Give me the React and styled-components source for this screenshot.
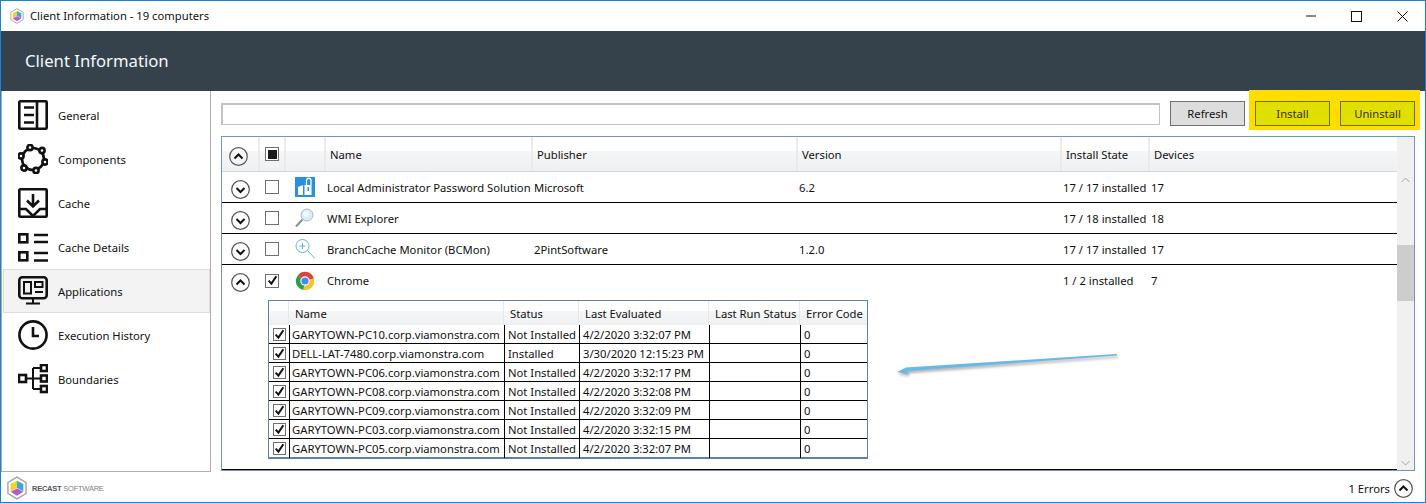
import React from "react";
import styled, { createGlobalStyle } from "styled-components";

//*********************************************************
// Data
//*********************************************************
const apps = [
	{ name: "Local Administrator Password Solution", publisher: "Microsoft", version: "6.2", state: "17 / 17 installed", devices: "17", icon: "laps" },
	{ name: "WMI Explorer", publisher: "", version: "", state: "17 / 18 installed", devices: "18", icon: "wmi" },
	{ name: "BranchCache Monitor (BCMon)", publisher: "2PintSoftware", version: "1.2.0", state: "17 / 17 installed", devices: "17", icon: "bc" }
];

const machines = [
	["GARYTOWN-PC10.corp.viamonstra.com", "Not Installed", "4/2/2020 3:32:07 PM"],
	["DELL-LAT-7480.corp.viamonstra.com", "Installed", "3/30/2020 12:15:23 PM"],
	["GARYTOWN-PC06.corp.viamonstra.com", "Not Installed", "4/2/2020 3:32:17 PM"],
	["GARYTOWN-PC08.corp.viamonstra.com", "Not Installed", "4/2/2020 3:32:08 PM"],
	["GARYTOWN-PC09.corp.viamonstra.com", "Not Installed", "4/2/2020 3:32:09 PM"],
	["GARYTOWN-PC03.corp.viamonstra.com", "Not Installed", "4/2/2020 3:32:15 PM"],
	["GARYTOWN-PC05.corp.viamonstra.com", "Not Installed", "4/2/2020 3:32:07 PM"]
];

//*********************************************************
// Styles
//*********************************************************
const GlobalStyle = createGlobalStyle`
	* { box-sizing: border-box; }
	body {
		margin: 0;
		background: #fff;
		font-family: "Noto Sans", "Open Sans", sans-serif;
		font-size: 11.25px;
		color: #111;
	}
`;

const Window = styled.div`
	width: 1426px;
	height: 503px;
	border: 1px solid #1883d7;
	display: flex;
	flex-direction: column;
	overflow: hidden;
`;

const TitleBar = styled.div`
	height: 30px;
	flex: none;
	display: flex;
	align-items: center;
	padding-left: 9px;
`;

const TitleText = styled.span`
	flex: 1;
	padding: 0 0 1px 6px;
`;

const WinButton = styled.div`
	width: 45.5px;
	height: 30px;
	display: flex;
	align-items: center;
	justify-content: center;
`;

const Banner = styled.div`
	height: 60px;
	flex: none;
	background: #36424b;
	color: #f4f8fb;
	font-size: 16.7px;
	display: flex;
	align-items: center;
	padding: 0 0 2px 24px;
`;

const Body = styled.div`
	height: 381px;
	flex: none;
	display: flex;
`;

const Sidebar = styled.nav`
	width: 210px;
	flex: none;
	border: 1px solid #aeaeae;
	border-top: none;
	padding: 2px 0 0 1px;
`;

const NavItem = styled.div`
	height: 44px;
	width: 207px;
	display: flex;
	align-items: center;
	gap: 10px;
	padding-left: 14px;
	border: 1px solid ${(p) => (p.$active ? "#dcdcdc" : "transparent")};
	background: ${(p) => (p.$active ? "#f3f3f3" : "transparent")};
`;

const Main = styled.main`
	flex: 1;
	min-width: 0;
	display: flex;
	flex-direction: column;
`;

const Toolbar = styled.div`
	height: 39px;
	flex: none;
	display: flex;
	align-items: flex-start;
	padding: 10px 5px 0 10px;
	margin-bottom: 6px;
`;

const SearchInput = styled.div`
	flex: 1;
	height: 22px;
	margin: 2px 10px 0 0;
	border: 2px solid #c2c2c2;
	border-right-width: 1px;
	border-bottom-width: 1px;
	background: #fff;
`;

const Button = styled.div`
	width: 75px;
	height: 25px;
	display: flex;
	align-items: center;
	justify-content: center;
	background: #dddddd;
	border: 1.5px solid #707070;
`;

const RefreshButton = styled(Button)`
	margin-right: 4px;
`;

const Highlight = styled.div`
	display: flex;
	gap: 10px;
	height: 40px;
	margin-top: -11px;
	padding: 11px 5px 4px 6px;
	background: #ffdd00;
`;

const ActionButton = styled(Button)`
	background: #e0df00;
	border-color: #6d6a18;
	color: #3a2f00;
`;

const DataGrid = styled.div`
	position: relative;
	height: 335px;
	margin: 0 10px;
	border: 1px solid #6b98c6;
	display: flex;
	overflow: hidden;
`;

const GridBody = styled.div`
	flex: 1;
	min-width: 0;
`;

const columns = "38px 26px 40px 207px 265px 264px 88px 1fr";

const HeadRow = styled.div`
	height: 35px;
	display: grid;
	grid-template-columns: ${columns};
	background: linear-gradient(#fff 0, #fff 14px, #f5f6f7 14px, #eff0f2 100%);
	border-bottom: 1px solid #d3d6da;
`;

const HeadCell = styled.div`
	display: flex;
	align-items: center;
	padding: 1px 0 0 4px;
	border-right: 2px solid #e9eaec;
	&:last-child {
		border-right: none;
	}
`;

const ToggleHeadCell = styled(HeadCell)`
	padding: 5px 3px 0 0;
	justify-content: center;
`;

const CheckHeadCell = styled(HeadCell)`
	padding: 0 0 0 5px;
`;

const AppRow = styled.div`
	height: 31px;
	display: grid;
	grid-template-columns: ${columns};
	align-items: center;
	border-bottom: ${(p) => (p.$open ? "none" : "1px solid #000")};
`;

const Cell = styled.div`
	white-space: nowrap;
	padding-left: 1px;
`;

const ToggleCell = styled.div`
	display: flex;
	justify-content: center;
	margin-top: 4px;
	padding-right: 2px;
`;

const IconCell = styled.div`
	display: flex;
	padding-left: 9px;
`;

const CheckCell = styled.div`
	display: flex;
	padding-left: 5px;
`;

const Box = styled.div`
	width: ${(p) => p.$size}px;
	height: ${(p) => p.$size}px;
	border: 1px solid #6f6f6f;
	background: #fff;
	display: flex;
	align-items: center;
	justify-content: center;
`;

const BoxFill = styled.div`
	width: 9px;
	height: 9px;
	background: #1b1b1b;
`;

const Expanded = styled.div`
	height: 174px;
	padding: 4px 0 0 46px;
	border-bottom: 1px solid #000;
`;

const SubTable = styled.div`
	width: 600px;
	height: 159px;
	border: 1px solid #5d82a8;
	border-bottom-width: 2px;
`;

const subColumns = "20px 215px 75px 130px 91px 1fr";

const SubHead = styled.div`
	height: 24px;
	display: grid;
	grid-template-columns: ${subColumns};
	background: linear-gradient(#fff 0, #fff 10px, #f5f6f7 10px, #eff0f2 100%);
`;

const SubHeadCell = styled.div`
	display: flex;
	align-items: center;
	padding-left: 6px;
	border-right: 1.5px solid #e6e7e9;
	white-space: nowrap;
	&:last-child {
		border-right: none;
	}
`;

const SubRow = styled.div`
	height: 19px;
	display: grid;
	grid-template-columns: ${subColumns};
	border-bottom: 1px solid #000;
	&:last-child {
		border-bottom: none;
	}
`;

const SubCell = styled.div`
	display: flex;
	align-items: center;
	padding-left: 3px;
	border-left: 1px solid #000;
	white-space: nowrap;
	&:first-child {
		border-left: none;
		padding-left: 4px;
	}
	&:nth-child(2) {
		padding-left: 2px;
	}
`;

const Scrollbar = styled.div`
	width: 17px;
	flex: none;
	background: #f0f0f0;
	padding-top: 108px;
	position: relative;
`;

const ScrollArrow = styled.div`
	position: absolute;
	left: 4px;
	top: ${(p) => p.$top}px;
	display: flex;
`;

const Thumb = styled.div`
	width: 17px;
	height: 56px;
	background: #cdcdcd;
`;

const Arrow = styled.svg`
	position: absolute;
	left: 670px;
	top: 210px;
	filter: drop-shadow(1px 2px 1.5px rgba(90, 90, 90, 0.55));
`;

const Footer = styled.footer`
	flex: 1;
	display: flex;
	align-items: center;
	justify-content: space-between;
	padding: 0 12px 0 6px;
`;

const Brand = styled.div`
	display: flex;
	align-items: center;
	gap: 5px;
	font-family: "Liberation Sans", sans-serif;
	font-size: 7.5px;
	color: #7b7f84;
	letter-spacing: -0.25px;
	padding-top: 2px;
`;

const BrandStrong = styled.b`
	color: #50565c;
	margin-right: 2px;
`;

const Errors = styled.div`
	display: flex;
	align-items: center;
	gap: 4px;
	padding-top: 2px;
`;

//*********************************************************
// Icons
//*********************************************************
const Glyph = ({ children }) => (
	<svg width="30" height="30" viewBox="0 0 30 30" fill="none" stroke="#111" strokeWidth="2.6">
		{children}
	</svg>
);

const GeneralIcon = () => (
	<Glyph>
		<rect x="1.300" y="1.300" width="27.400" height="27.400" rx="1" />
		<path d="M19 1v28M6 7.500h10M6 15h10M6 22.500h10" />
	</Glyph>
);

const ComponentsIcon = () => (
	<Glyph>
		<circle cx="15" cy="15" r="11" />
		<g fill="#fff">
			<circle cx="12" cy="3.500" r="2.600" />
			<circle cx="24" cy="6.500" r="2.600" />
			<circle cx="27" cy="18" r="2.600" />
			<circle cx="18" cy="26.500" r="2.600" />
			<circle cx="6" cy="24" r="2.600" />
			<circle cx="3" cy="12" r="2.600" />
		</g>
	</Glyph>
);

const CacheIcon = () => (
	<Glyph>
		<rect x="1.300" y="1.300" width="27.400" height="27.400" rx="1" />
		<path d="M15 6v12M9 12.500l6 6 6-6M1 21h7l7 7 7-7h7" />
	</Glyph>
);

const DetailsIcon = () => (
	<Glyph>
		<rect x="1.300" y="2.300" width="8" height="8" />
		<rect x="1.300" y="20.300" width="8" height="8" />
		<path d="M16 3h14M16 10h14M16 21h14M16 28.500h14" />
	</Glyph>
);

const AppsIcon = () => (
	<Glyph>
		<rect x="1.300" y="1.300" width="27.400" height="21" rx="3" />
		<rect x="6" y="6" width="7" height="11.500" strokeWidth="2" />
		<rect x="17" y="6" width="7.500" height="5" strokeWidth="2" />
		<path d="M17 16h8M15 22v5M8 27.500h14" strokeWidth="2" />
	</Glyph>
);

const ClockIcon = () => (
	<Glyph>
		<circle cx="15" cy="15" r="13.600" />
		<path d="M15 7v9h6" />
	</Glyph>
);

const BoundariesIcon = () => (
	<Glyph>
		<rect x="1" y="11" width="7" height="7" />
		<rect x="23" y="1" width="6" height="6" />
		<rect x="23" y="11.500" width="6" height="6" />
		<rect x="23" y="22" width="6" height="6" />
		<path d="M8 14.500h15M15 4v21M15 4h8M15 25h8" strokeWidth="2" />
	</Glyph>
);

const navItems = [
	["General", GeneralIcon],
	["Components", ComponentsIcon],
	["Cache", CacheIcon],
	["Cache Details", DetailsIcon],
	["Applications", AppsIcon],
	["Execution History", ClockIcon],
	["Boundaries", BoundariesIcon]
];

const Toggle = ({ up }) => (
	<svg width="19" height="19" viewBox="0 0 19 19" fill="none">
		<circle cx="9.500" cy="9.500" r="8.800" stroke="#555" strokeWidth="1.200" />
		<path d={up ? "M5.500 11.500l4-4 4 4" : "M5.500 8l4 4 4-4"} stroke="#111" strokeWidth="2" />
	</svg>
);

const Check = ({ size = 14 }) => (
	<Box $size={size}>
		<svg width="11" height="11" viewBox="0 0 12 12" fill="none">
			<path d="M1.800 6.200l3 3.200 5.400-8" stroke="#111" strokeWidth="2.200" />
		</svg>
	</Box>
);

const Logo = ({ w, h }) => (
	<svg width={w} height={h} viewBox="0 0 22 26">
		<path d="M11 1L21 7v12l-10 6L1 19V7z" fill="#fff" stroke="#9a9fa3" strokeWidth="1.400" />
		<path d="M4 8.500L11 5v8l-7 3.500z" fill="#f8d21c" />
		<path d="M11 5l7 3.500v8L11 13z" fill="#3aa7e0" />
		<path d="M4 17l7-3.500 7 3.500-7 4.500z" fill="#b25cc8" />
	</svg>
);

const LapsIcon = () => (
	<svg width="20" height="20" viewBox="0 0 20 20">
		<rect width="20" height="20" fill="#2b8fdf" />
		<path d="M3 10l5-2v10H3zM9.500 8h7v10h-7z" fill="#fff" />
		<path d="M11.500 8V3.500a2.200 2.200 0 0 1 4.500 0V8" fill="none" stroke="#fff" strokeWidth="1.300" />
		<rect x="12.500" y="10" width="1.500" height="4" fill="#2b8fdf" />
	</svg>
);

const WmiIcon = () => (
	<svg width="20" height="20" viewBox="0 0 20 20">
		<path d="M1 18.500L7.500 11.500" stroke="#8a8f94" strokeWidth="2" />
		<circle cx="12" cy="7" r="6" fill="#d7ecfb" stroke="#a9b7c2" />
		<circle cx="11" cy="6" r="3" fill="#eef8ff" />
	</svg>
);

const BcIcon = () => (
	<svg width="20" height="20" viewBox="0 0 20 20" fill="none" stroke="#5db4e6">
		<circle cx="7.500" cy="7" r="6.500" />
		<path d="M7.500 4v6M4.500 7h6" />
		<path d="M12.500 11.500L20 19.500" />
	</svg>
);

const ChromeIcon = () => (
	<svg width="20" height="20" viewBox="0 0 24 24">
		<path d="M12 12L3.500 5A11 11 0 0 1 22.700 9z" fill="#dc4437" />
		<path d="M12 12L22.700 9A11 11 0 0 1 10 22.800z" fill="#f6c42d" />
		<path d="M12 12L10 22.800A11 11 0 0 1 3.500 5z" fill="#2f9e4f" />
		<circle cx="12" cy="12" r="5.600" fill="#fff" />
		<circle cx="12" cy="12" r="4.300" fill="#4a8af0" />
	</svg>
);

const appIcons = { laps: LapsIcon, wmi: WmiIcon, bc: BcIcon };

//*********************************************************
// Component
//*********************************************************
const App = () => (
	<Window>
		<GlobalStyle />
		<TitleBar>
			<Logo w={14} h={16} />
			<TitleText>Client Information - 19 computers</TitleText>
			<WinButton>
				<svg width="10" height="10"><path d="M0 5h10" stroke="#111" /></svg>
			</WinButton>
			<WinButton>
				<svg width="11" height="11"><rect x=".5" y=".5" width="10" height="10" fill="none" stroke="#111" /></svg>
			</WinButton>
			<WinButton>
				<svg width="11" height="11"><path d="M.5.5l10 10M10.500.5l-10 10" stroke="#111" /></svg>
			</WinButton>
		</TitleBar>
		<Banner>Client Information</Banner>
		<Body>
			<Sidebar>
				{navItems.map(([label, Icon]) => (
					<NavItem key={label} $active={label === "Applications"}>
						<Icon />
						{label}
					</NavItem>
				))}
			</Sidebar>
			<Main>
				<Toolbar>
					<SearchInput />
					<RefreshButton>Refresh</RefreshButton>
					<Highlight>
						<ActionButton>Install</ActionButton>
						<ActionButton>Uninstall</ActionButton>
					</Highlight>
				</Toolbar>
				<DataGrid>
					<GridBody>
						<HeadRow>
							<ToggleHeadCell><Toggle up /></ToggleHeadCell>
							<CheckHeadCell>
								<Box $size={14}><BoxFill /></Box>
							</CheckHeadCell>
							<HeadCell />
							<HeadCell>Name</HeadCell>
							<HeadCell>Publisher</HeadCell>
							<HeadCell>Version</HeadCell>
							<HeadCell>Install State</HeadCell>
							<HeadCell>Devices</HeadCell>
						</HeadRow>
						{apps.map((app) => {
							const Icon = appIcons[app.icon];
							return (
								<AppRow key={app.name}>
									<ToggleCell><Toggle /></ToggleCell>
									<CheckCell><Box $size={14} /></CheckCell>
									<IconCell><Icon /></IconCell>
									<Cell>{app.name}</Cell>
									<Cell>{app.publisher}</Cell>
									<Cell>{app.version}</Cell>
									<Cell>{app.state}</Cell>
									<Cell>{app.devices}</Cell>
								</AppRow>
							);
						})}
						<AppRow $open>
							<ToggleCell><Toggle up /></ToggleCell>
							<CheckCell><Check /></CheckCell>
							<IconCell><ChromeIcon /></IconCell>
							<Cell>Chrome</Cell>
							<Cell />
							<Cell />
							<Cell>1 / 2 installed</Cell>
							<Cell>7</Cell>
						</AppRow>
						<Expanded>
							<SubTable>
								<SubHead>
									<SubHeadCell />
									<SubHeadCell>Name</SubHeadCell>
									<SubHeadCell>Status</SubHeadCell>
									<SubHeadCell>Last Evaluated</SubHeadCell>
									<SubHeadCell>Last Run Status</SubHeadCell>
									<SubHeadCell>Error Code</SubHeadCell>
								</SubHead>
								{machines.map(([name, status, evaluated]) => (
									<SubRow key={name}>
										<SubCell><Check size={13} /></SubCell>
										<SubCell>{name}</SubCell>
										<SubCell>{status}</SubCell>
										<SubCell>{evaluated}</SubCell>
										<SubCell />
										<SubCell>0</SubCell>
									</SubRow>
								))}
							</SubTable>
						</Expanded>
					</GridBody>
					<Scrollbar>
						<ScrollArrow $top={40}>
							<svg width="9" height="6"><path d="M.5 5l4-4 4 4" fill="none" stroke="#a6a6a6" /></svg>
						</ScrollArrow>
						<Thumb />
						<ScrollArrow $top={323}>
							<svg width="9" height="6"><path d="M.5 1l4 4 4-4" fill="none" stroke="#a6a6a6" /></svg>
						</ScrollArrow>
					</Scrollbar>
					<Arrow width="232" height="30" viewBox="0 0 232 30">
						<path d="M5 25L14 20.500L225 7L225 8.500L15 24L17 27z" fill="#68b8e8" />
					</Arrow>
				</DataGrid>
			</Main>
		</Body>
		<Footer>
			<Brand>
				<Logo w={20} h={24} />
				<span><BrandStrong>RECAST</BrandStrong>SOFTWARE</span>
			</Brand>
			<Errors>
				1 Errors
				<Toggle up />
			</Errors>
		</Footer>
	</Window>
);

export default App;
